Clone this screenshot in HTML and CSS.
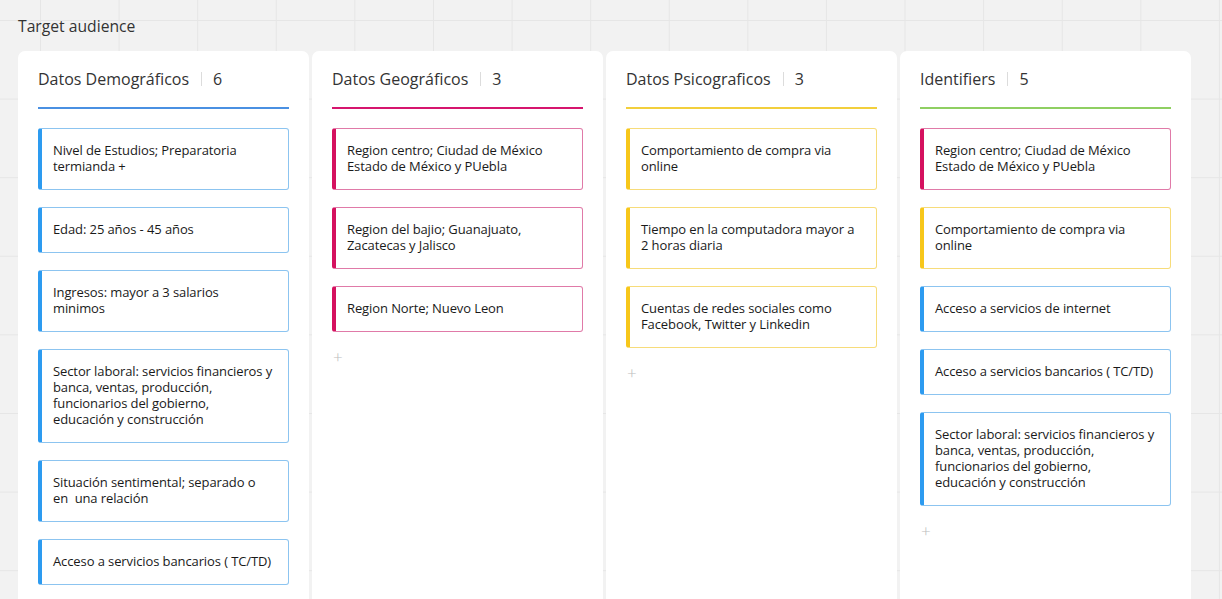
FILE: index.html
```html
<!DOCTYPE html>
<html lang="es">
<head>
<meta charset="utf-8">
<title>Target audience</title>
<link rel="stylesheet" href="styles.css">
</head>
<body>
<div class="frame-title">Target audience</div>
<div class="board">
  <section class="col col-blue">
    <header class="col-head"><span class="col-name">Datos Demográficos</span><span class="sep"></span><span class="count">6</span></header>
    <div class="cards">
      <div class="card blue">Nivel de Estudios; Preparatoria<br>termianda +</div>
      <div class="card blue">Edad: 25 años - 45 años</div>
      <div class="card blue">Ingresos: mayor a 3 salarios<br>minimos</div>
      <div class="card blue">Sector laboral: servicios financieros y<br>banca, ventas, producción,<br>funcionarios del gobierno,<br>educación y construcción</div>
      <div class="card blue">Situación sentimental; separado o<br>en&nbsp; una relación</div>
      <div class="card blue">Acceso a servicios bancarios ( TC/TD)</div>
    </div>
  </section>
  <section class="col col-pink">
    <header class="col-head"><span class="col-name">Datos Geográficos</span><span class="sep"></span><span class="count">3</span></header>
    <div class="cards">
      <div class="card pink">Region centro; Ciudad de México<br>Estado de México y PUebla</div>
      <div class="card pink">Region del bajio; Guanajuato,<br>Zacatecas y Jalisco</div>
      <div class="card pink">Region Norte; Nuevo Leon</div>
      <div class="add">+</div>
    </div>
  </section>
  <section class="col col-yellow">
    <header class="col-head"><span class="col-name">Datos Psicograficos</span><span class="sep"></span><span class="count">3</span></header>
    <div class="cards">
      <div class="card yellow">Comportamiento de compra via<br>online</div>
      <div class="card yellow">Tiempo en la computadora mayor a<br>2 horas diaria</div>
      <div class="card yellow">Cuentas de redes sociales como<br>Facebook, Twitter y Linkedin</div>
      <div class="add">+</div>
    </div>
  </section>
  <section class="col col-green">
    <header class="col-head"><span class="col-name">Identifiers</span><span class="sep"></span><span class="count">5</span></header>
    <div class="cards">
      <div class="card pink">Region centro; Ciudad de México<br>Estado de México y PUebla</div>
      <div class="card yellow">Comportamiento de compra via<br>online</div>
      <div class="card blue">Acceso a servicios de internet</div>
      <div class="card blue">Acceso a servicios bancarios ( TC/TD)</div>
      <div class="card blue">Sector laboral: servicios financieros y<br>banca, ventas, producción,<br>funcionarios del gobierno,<br>educación y construcción</div>
      <div class="add">+</div>
    </div>
  </section>
</div>
</body>
</html>
```

FILE: styles.css
```css
html, body {
  margin: 0;
  padding: 0;
  height: 100%;
  overflow: hidden;
}
body {
  font-family: "Open Sans", "Noto Sans", sans-serif;
  color: #222;
  background-color: #f2f2f2;
  background-image:
    linear-gradient(to right, #e6e6e6 1px, transparent 1px),
    linear-gradient(to bottom, #e6e6e6 1px, transparent 1px);
  background-size: 78.6px 78.6px;
  background-position: 40px 20px;
}
.frame-title {
  font-size: 15.7px;
  line-height: 22px;
  padding: 15px 0 0 18px;
  height: 36px;
  color: #333;
}
.board {
  display: flex;
  gap: 3px;
  padding-left: 18px;
  align-items: flex-start;
  height: 548px;
  overflow: hidden;
}
.col {
  width: 291px;
  box-sizing: border-box;
  height: 620px;
  background: #fff;
  border-radius: 7px 7px 0 0;
  padding: 0 20px;
}
.col-head {
  height: 56px;
  display: flex;
  align-items: center;
  border-bottom: 2px solid #4a90e2;
  font-size: 16px;
  color: #333;
}
.col-pink .col-head { border-bottom-color: #d6156e; }
.col-yellow .col-head { border-bottom-color: #f2cf3c; }
.col-green .col-head { border-bottom-color: #8fcf62; }
.sep {
  display: inline-block;
  width: 1px;
  height: 14px;
  background: #dcdcdc;
  margin: 0 11px 0 12px;
}
.cards {
  display: flex;
  flex-direction: column;
  gap: 17px;
  margin-top: 19px;
}
.card {
  box-sizing: border-box;
  width: 251px;
  font-size: 13px;
  letter-spacing: -0.1px;
  line-height: 16px;
  padding: 13px 4px 15px 11px;
  white-space: nowrap;
  border: 1px solid #8cc4f0;
  border-left: 4px solid #2d9bf0;
  border-radius: 3px;
  background: #fff;
  color: #1a1a1a;
}
.card.pink {
  border-color: #e07aa8;
  border-left-color: #d5115f;
}
.card.yellow {
  border-color: #f7dc7a;
  border-left-color: #f7c71a;
}
.card.blue {
  border-color: #8cc4f0;
  border-left-color: #2d9bf0;
}
.add {
  font-size: 17px;
  line-height: 16px;
  height: 16px;
  color: #bdbdbd;
  padding-left: 1px;
  font-weight: 300;
}
```
